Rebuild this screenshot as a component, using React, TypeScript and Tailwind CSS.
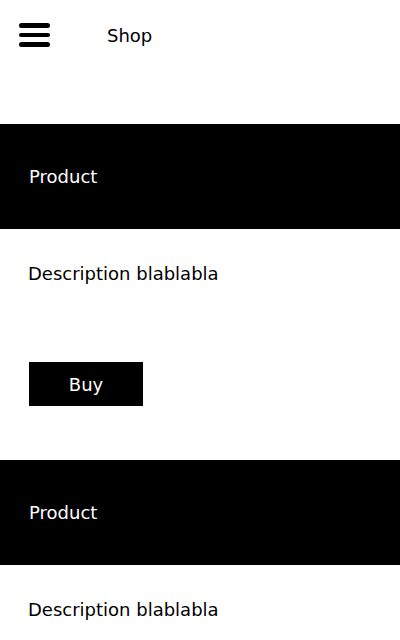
const products = [
  { title: "Product", description: "Description blablabla" },
  { title: "Product", description: "Description blablabla" },
];

export default function App() {
  return (
    <main className="min-h-screen bg-white text-black font-['DejaVu_Sans',sans-serif]">
      {/* Header */}
      <header className="flex h-[70px] items-center pl-[19px]">
        <div className="flex w-[31px] flex-col gap-[5px]">
          <span className="block h-[4.5px] rounded-full bg-black" />
          <span className="block h-[4.5px] rounded-full bg-black" />
          <span className="block h-[4.5px] rounded-full bg-black" />
        </div>
        <span className="ml-[57px] text-[18px] leading-[27px]">Shop</span>
      </header>

      {/* Products */}
      <div className="mt-[54px] flex flex-col gap-[54px]">
        {products.map((p, i) => (
          <section key={i}>
            <div className="flex h-[105px] items-center bg-black pl-[29px] text-[18px] text-white">{p.title}</div>
            <p className="mt-[31px] pl-[28px] text-[18px] leading-[27px]">{p.description}</p>
            <button className="ml-[29px] mt-[75px] flex h-[44px] w-[114px] items-center justify-center bg-black text-[18px] text-white">
              Buy
            </button>
          </section>
        ))}
      </div>
    </main>
  );
}
